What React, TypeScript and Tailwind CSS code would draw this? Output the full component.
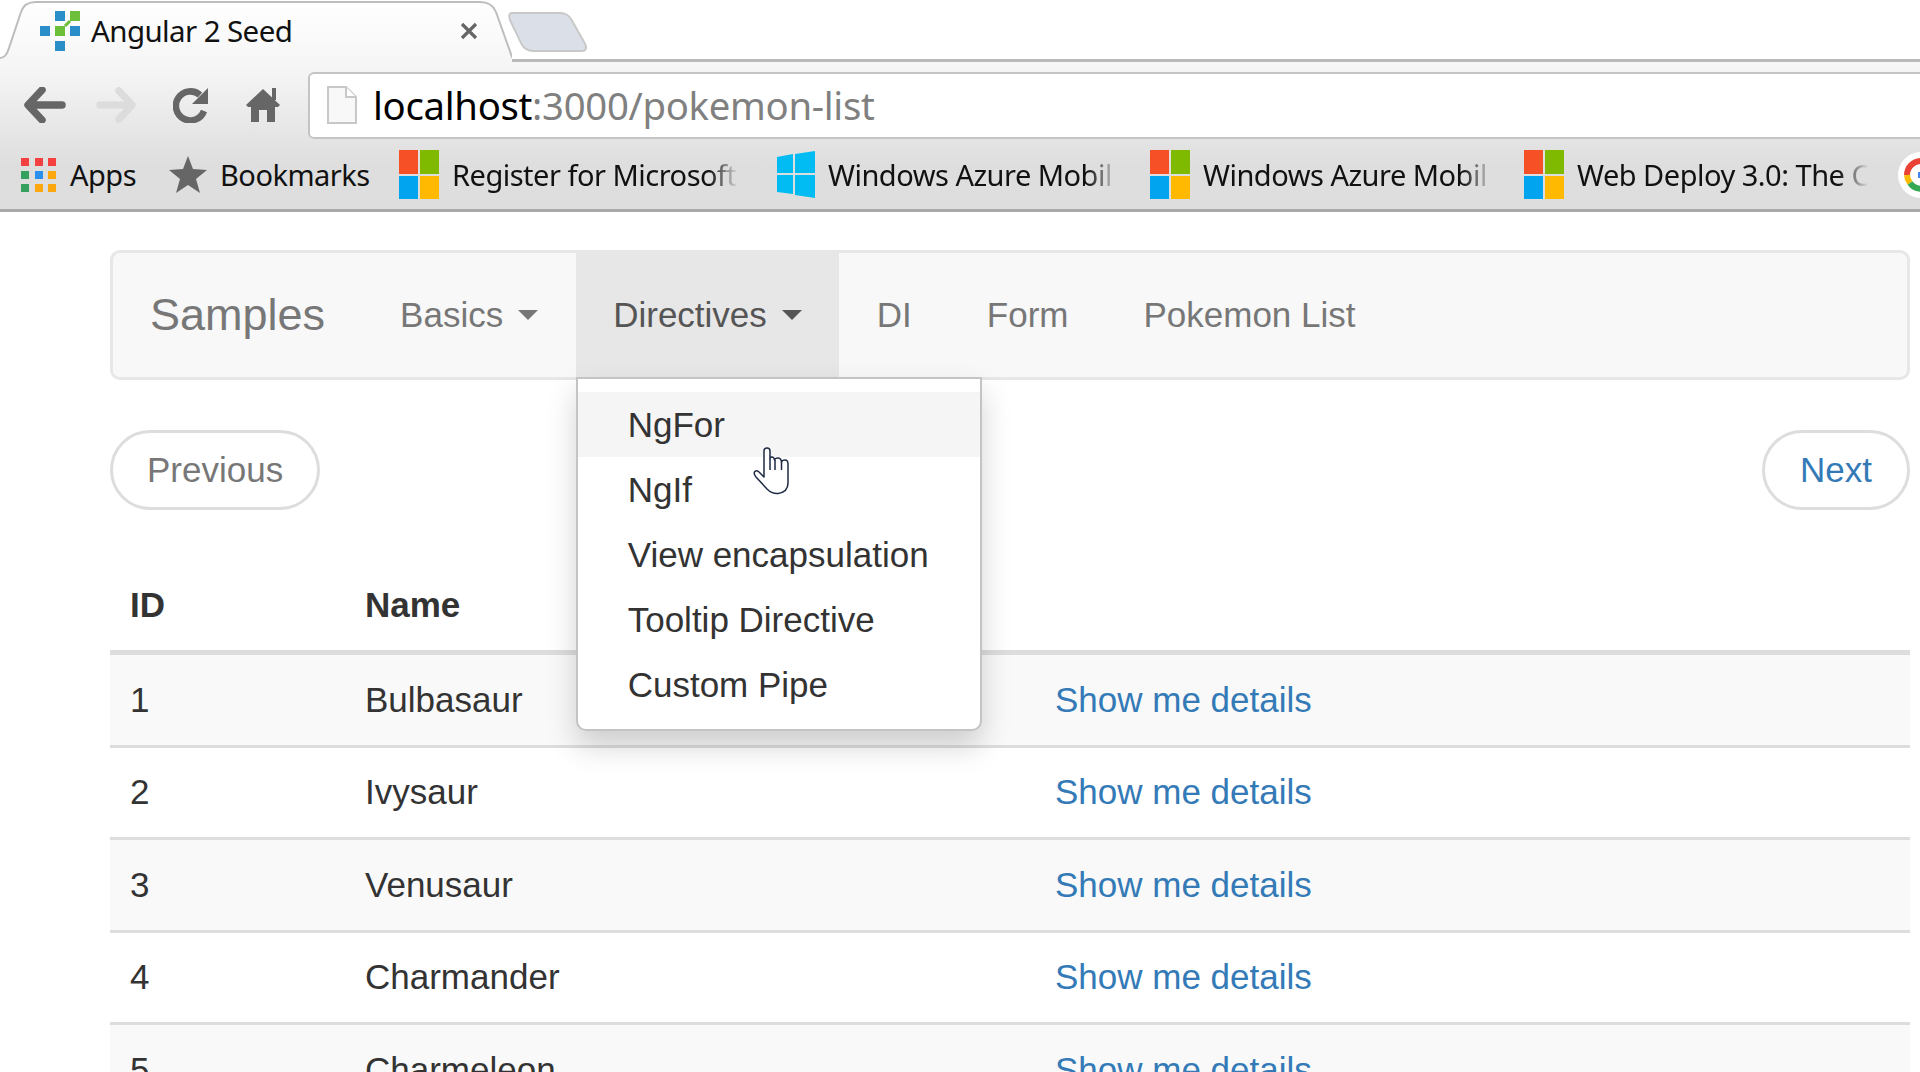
import React from "react"

const pokemon = ["Bulbasaur", "Ivysaur", "Venusaur", "Charmander", "Charmeleon"]
const menuItems = ["NgFor", "NgIf", "View encapsulation", "Tooltip Directive", "Custom Pipe"]

const Caret = () => (
  <span className="inline-block w-0 h-0 ml-[15px] border-t-[10px] border-x-[10px] border-t-current border-x-transparent" />
)

const Favicon = () => (
  <svg width="42" height="42" viewBox="0 0 42 42" className="shrink-0 mt-[3px]">
    <rect x="15" y="0" width="10" height="10" fill="#2a8fc9" />
    <rect x="30" y="0" width="10" height="10" fill="#6cbf3a" />
    <rect x="0" y="15" width="10" height="10" fill="#2a8fc9" />
    <rect x="15" y="15" width="10" height="10" fill="#6cbf3a" />
    <rect x="30" y="15" width="10" height="10" fill="#2a8fc9" />
    <rect x="15" y="30" width="10" height="10" fill="#2a8fc9" />
    <path d="M25 15 L30 10" stroke="#6cbf3a" strokeWidth="3" />
  </svg>
)

const MsLogo = () => (
  <svg width="40" height="49" viewBox="0 0 40 49" className="shrink-0">
    <rect x="0" y="0" width="19" height="24" fill="#f65026" />
    <rect x="21" y="0" width="19" height="24" fill="#7fba00" />
    <rect x="0" y="26" width="19" height="23" fill="#00a4ef" />
    <rect x="21" y="26" width="19" height="23" fill="#ffb900" />
  </svg>
)

const WinLogo = () => (
  <svg width="38" height="47" viewBox="0 0 38 47" className="shrink-0">
    <path d="M0 6 L16 3 V22 H0 Z M18 3 L38 0 V22 H18 Z M0 24 H16 V43 L0 41 Z M18 24 H38 V47 L18 44 Z" fill="#00bcf2" />
  </svg>
)

const AppsIcon = () => {
  const colors = ["#f44040", "#f44040", "#f44040", "#36a15e", "#2b8ff0", "#fba70f", "#36a15e", "#fba70f", "#fba70f"]
  return (
    <div className="grid grid-cols-3 gap-[5px] w-[36px] shrink-0">
      {colors.map((c, i) => (
        <svg key={i} width="8" height="8" viewBox="0 0 8 8">
          <rect width="8" height="8" fill={c} />
        </svg>
      ))}
    </div>
  )
}

const Bookmark = ({ icon, label, width, fade }: { icon: React.ReactNode; label: string; width: number; fade?: boolean }) => (
  <div className="flex items-center gap-[13px] shrink-0">
    {icon}
    <span
      className={`whitespace-nowrap ${fade ? "overflow-hidden [mask-image:linear-gradient(to_right,black_90%,transparent)]" : ""}`}
      style={{ width }}
    >
      {label}
    </span>
  </div>
)

const BrowserChrome = () => (
  <div className="font-['Noto_Sans',sans-serif] text-[#111]">
    {/* Tab strip */}
    <div className="flex h-[62px] bg-white border-b-[3px] border-[#b9b9b9]">
      <div className="relative w-[508px] h-[62px] shrink-0 flex items-center">
        <svg width="512" height="62" viewBox="0 0 512 62" className="absolute left-0 top-0">
          <defs>
            <linearGradient id="tabFill" x1="0" y1="0" x2="0" y2="1">
              <stop offset="0" stopColor="#ffffff" />
              <stop offset="1" stopColor="#f6f6f6" />
            </linearGradient>
          </defs>
          <path d="M0 62 V58 Q6 58 9 48 L21 12 Q24 2 36 2 H480 Q492 2 496 12 L513 62 Z" fill="url(#tabFill)" />
          <path d="M0 58 Q6 58 9 48 L21 12 Q24 2 36 2 H480 Q492 2 496 12 L512 57 Q514 60 520 60" fill="none" stroke="#bdbdbd" strokeWidth="2" />
        </svg>
        <div className="relative flex items-center ml-[40px] mt-[-1px]">
          <Favicon />
          <span className="ml-[9px] w-[369px] text-[29.5px] tracking-[-0.6px] leading-none">Angular 2 Seed</span>
          <svg width="18" height="18" viewBox="0 0 18 18">
            <path d="M2 2 L16 16 M16 2 L2 16" stroke="#666" strokeWidth="3.2" />
          </svg>
        </div>
      </div>
      <svg width="81" height="44" viewBox="0 0 84 44" className="mt-[10px] shrink-0" preserveAspectRatio="none">
        <path d="M4 3 H54 Q62 3 66 10 L80 34 Q83 41 76 41 H26 Q18 41 14 34 L2 10 Q0 3 4 3 Z" fill="#dbe0e8" stroke="#c8c8c8" strokeWidth="2" />
      </svg>
    </div>

    <div className="bg-linear-to-b from-[#f7f7f7] to-[#dedede] to-[70%] border-b-[3px] border-[#a9a9a9]">
      {/* Toolbar */}
      <div className="flex items-center h-[78px] pt-[8px] pl-[24px]">
        <svg width="42" height="36" viewBox="0 0 42 36" className="shrink-0">
          <path d="M38 18 H5 M18 3 L4 18 L18 33" fill="none" stroke="#666" strokeWidth="7.5" strokeLinecap="round" strokeLinejoin="round" />
        </svg>
        <svg width="40" height="36" viewBox="0 0 42 36" className="ml-[30px] shrink-0">
          <path d="M4 18 H37 M24 3 L38 18 L24 33" fill="none" stroke="#dcdcdc" strokeWidth="7.5" strokeLinecap="round" strokeLinejoin="round" />
        </svg>
        <svg width="36" height="36" viewBox="0 0 36 36" className="ml-[37px] shrink-0">
          <path d="M27 8 A14.5 14.5 0 1 0 31 24" fill="none" stroke="#666" strokeWidth="6.5" />
          <path d="M35 1 V17 H19 Z" fill="#666" />
        </svg>
        <svg width="34" height="36" viewBox="0 0 34 36" className="ml-[37px] shrink-0">
          <path d="M17 2 L34 18 L32 20 H29 V35 H21 V23 H13 V35 H5 V20 H2 L0 18 Z" fill="#666" />
          <rect x="26" y="1" width="4" height="12" fill="#666" />
        </svg>
        <div className="flex items-center flex-1 ml-[28px] -mr-[10px] h-[67px] bg-white border-2 border-[#c4c4c4] rounded-l-[6px]">
          <svg width="30" height="38" viewBox="0 0 30 38" className="ml-[17px] shrink-0">
            <path d="M1 1 H19 L29 11 V37 H1 Z" fill="#f8f8f8" stroke="#c8c8c8" strokeWidth="2" />
            <path d="M19 1 V11 H29" fill="#fff" stroke="#c8c8c8" strokeWidth="2" />
          </svg>
          <span className="ml-[16px] text-[38.3px] tracking-[-0.3px] leading-none text-black">
            localhost<span className="text-[#808080]">:3000/pokemon-list</span>
          </span>
        </div>
      </div>

      {/* Bookmarks bar */}
      <div className="flex items-center h-[69px] pl-[21px] text-[29px] tracking-[-0.5px] overflow-hidden">
        <Bookmark icon={<AppsIcon />} label="Apps" width={66} />
        <div className="ml-[33px]">
          <Bookmark
            icon={
              <svg width="38" height="38" viewBox="0 0 38 38">
                <path d="M19 0 L24 13 L38 14 L27 23 L31 37 L19 29 L7 37 L11 23 L0 14 L14 13 Z" fill="#666" />
              </svg>
            }
            label="Bookmarks"
            width={149}
          />
        </div>
        <div className="ml-[30px]">
          <Bookmark icon={<MsLogo />} label="Register for Microsoft" width={286} fade />
        </div>
        <div className="ml-[39px]">
          <Bookmark icon={<WinLogo />} label="Windows Azure Mobil" width={289} fade />
        </div>
        <div className="ml-[33px]">
          <Bookmark icon={<MsLogo />} label="Windows Azure Mobil" width={289} fade />
        </div>
        <div className="ml-[32px]">
          <Bookmark icon={<MsLogo />} label="Web Deploy 3.0: The C" width={291} fade />
        </div>
        <svg width="46" height="46" viewBox="0 0 46 46" className="ml-[30px] shrink-0">
          <circle cx="23" cy="23" r="23" fill="#fff" />
          <path d="M9 23 A14 14 0 0 1 23 9" fill="none" stroke="#ea4335" strokeWidth="6" />
          <path d="M9 23 A14 14 0 0 0 12 31" fill="none" stroke="#fbbc05" strokeWidth="6" />
          <path d="M12 31 A14 14 0 0 0 33 33" fill="none" stroke="#34a853" strokeWidth="6" />
          <rect x="20" y="20" width="26" height="6" fill="#4285f4" />
        </svg>
      </div>
    </div>
  </div>
)

const Navbar = () => (
  <nav className="flex h-[130px] bg-[#f8f8f8] border-[3px] border-[#e7e7e7] rounded-[10px] text-[#777] text-[35px] leading-[50px]">
    <div className="flex items-center pl-[37px] pr-[37.5px] text-[45px]">Samples</div>
    <div className="flex items-center px-[37.5px]">
      Basics
      <Caret />
    </div>
    <div className="relative flex items-center px-[37.5px] bg-[#e7e7e7] text-[#555]">
      Directives
      <Caret />
      <div className="absolute left-0 top-full z-10 w-[406px] py-[12.5px] bg-white border-[2.5px] border-[#c4c4c4] rounded-b-[10px] shadow-[0_15px_30px_rgba(0,0,0,0.175)] text-[#333]">
        {menuItems.map((item, i) => (
          <div key={item} className={`h-[65px] leading-[65px] px-[50px] whitespace-nowrap ${i === 0 ? "bg-[#f5f5f5]" : ""}`}>
            {item}
          </div>
        ))}
      </div>
    </div>
    <div className="flex items-center px-[37.5px]">DI</div>
    <div className="flex items-center px-[37.5px]">Form</div>
    <div className="flex items-center px-[37.5px]">Pokemon List</div>
  </nav>
)

const PokemonTable = () => (
  <div className="text-[#333] text-[35px] leading-[50px]">
    <div className="grid grid-cols-[235px_690px_1fr] h-[95px] items-center pl-[20px] font-bold border-b-[5px] border-[#ddd]">
      <div>ID</div>
      <div>Name</div>
      <div />
    </div>
    {pokemon.map((name, i) => (
      <div
        key={name}
        className={`grid grid-cols-[235px_690px_1fr] h-[92.5px] items-center pl-[20px] border-b-[3px] border-[#ddd] ${
          i % 2 === 0 ? "bg-[#f9f9f9]" : "bg-white"
        }`}
      >
        <div>{i + 1}</div>
        <div>{name}</div>
        <div className="text-[#337ab7]">Show me details</div>
      </div>
    ))}
  </div>
)

export default function App() {
  return (
    <div className="relative h-[1072px] overflow-hidden bg-white">
      <BrowserChrome />
      <div className="pl-[110px] pr-[10px] pt-[38px] font-['Liberation_Sans',Arial,sans-serif]">
        <Navbar />
        <div className="flex justify-between mt-[50px] mb-[50px] text-[35px] leading-[50px]">
          <div className="h-[80px] px-[34px] flex items-center rounded-[40px] border-[3px] border-[#ddd] text-[#777]">Previous</div>
          <div className="h-[80px] px-[35px] flex items-center rounded-[40px] border-[3px] border-[#ddd] text-[#337ab7]">Next</div>
        </div>
        <PokemonTable />
      </div>

      {/* Mouse pointer */}
      <svg width="37" height="48" viewBox="0 0 37 48" className="absolute left-[753px] top-[447px] z-20">
        <path
          d="M11 30 L6 25 Q3 22.5 1.5 25 Q0.5 27 3 30 L14 42 Q19 47 25 46.5 Q35 45 35 36 L35 17 Q35 13 32 13 Q29 13 28.5 15 Q28 11 25 11 Q22 11 21.5 13 Q21 10 19 10 Q17.5 10 17 11 L17 4 Q17 1 14 1 Q11 1 11 4 Z"
          fill="#fff"
          stroke="#1f2a44"
          strokeWidth="1.5"
          strokeLinejoin="round"
        />
        <path d="M17 11 V23 M22 13 V23 M28.5 15 V23" fill="none" stroke="#1f2a44" strokeWidth="1.5" />
      </svg>
    </div>
  )
}
